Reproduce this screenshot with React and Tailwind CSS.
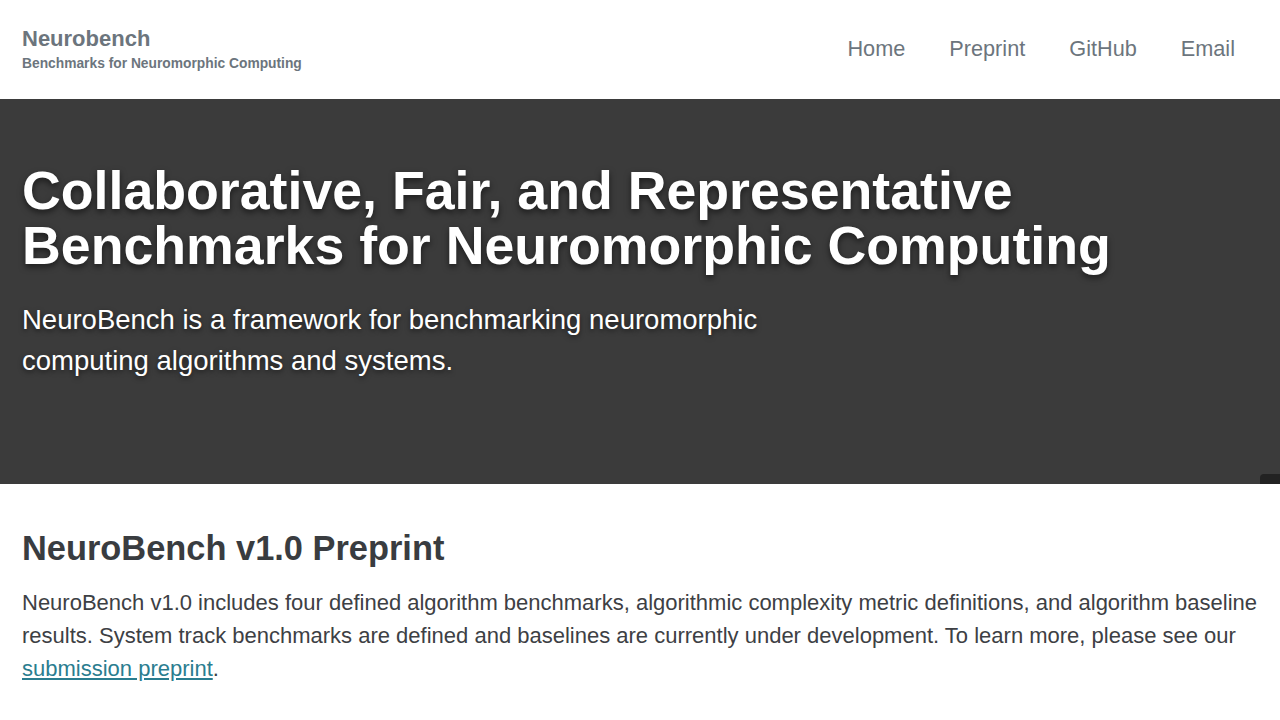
export default function App() {
  const navLinks = ["Home", "Preprint", "GitHub", "Email"];

  return (
    <div className="min-h-screen bg-white font-['Liberation_Sans',Arial,sans-serif]">
      {/* header */}
      <header className="flex h-[99px] items-center justify-between pl-[22px] pr-[23px]">
        <div className="text-[#6c757d]">
          <div className="text-[22px] font-bold leading-[1.2]">Neurobench</div>
          <div className="mt-[4px] text-[13.8px] font-bold leading-[1.2]">
            Benchmarks for Neuromorphic Computing
          </div>
        </div>
        <nav className="flex items-center">
          {navLinks.map((l) => (
            <a key={l} href="#" className="px-[22px] text-[21.7px] leading-[1.2] text-[#6c757d]">
              {l}
            </a>
          ))}
        </nav>
      </header>

      {/* hero */}
      <section className="relative overflow-hidden bg-[#3b3b3b] px-[22px] pb-[102px] pt-[64px] text-white">
        <h1 className="text-[53.7px] font-bold leading-[55px] [text-shadow:0_3px_6px_rgba(0,0,0,0.55)]">
          Collaborative, Fair, and Representative
          <br />
          Benchmarks for Neuromorphic Computing
        </h1>
        <p className="mt-[27px] max-w-[800px] text-[27.5px] leading-[40.8px] [text-shadow:0_2px_5px_rgba(0,0,0,0.55)]">
          NeuroBench is a framework for benchmarking neuromorphic computing algorithms and systems.
        </p>
        <div className="absolute bottom-0 right-0 h-[10px] w-[20px] rounded-tl-[4px] bg-[#222]" />
      </section>

      {/* preprint */}
      <section className="px-[22px] pt-[44px] text-[#3d4044]">
        <h2 className="text-[34.4px] font-bold leading-[1.2] text-[#393c40]">NeuroBench v1.0 Preprint</h2>
        <p className="mt-[17px] text-[22px] leading-[33px]">
          NeuroBench v1.0 includes four defined algorithm benchmarks, algorithmic complexity metric
          definitions, and algorithm baseline results. System track benchmarks are defined and
          baselines are currently under development. To learn more, please see our{" "}
          <a href="#" className="text-[#2a7d8f] underline">
            submission preprint
          </a>
          .
        </p>
      </section>
    </div>
  );
}
